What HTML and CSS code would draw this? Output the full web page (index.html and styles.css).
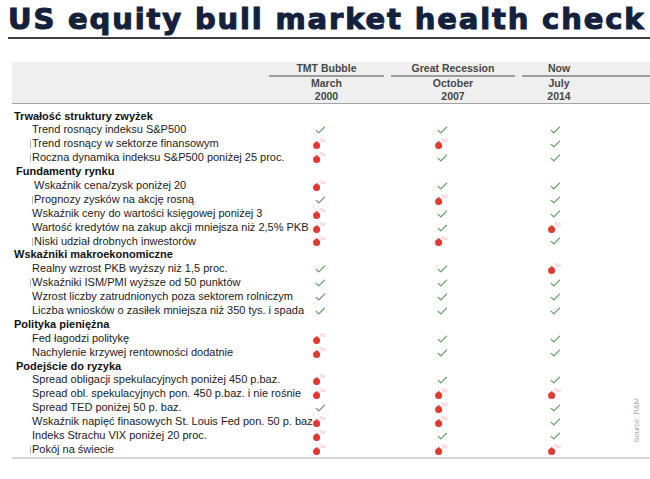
FILE: index.html
```html
<!DOCTYPE html>
<html lang="pl">
<head>
<meta charset="utf-8">
<title>US equity bull market health check</title>
<link rel="stylesheet" href="styles.css">
</head>
<body>
<header class="titlebar">
  <h1 class="title">US equity bull market health check</h1>
</header>

<section class="colhead">
  <div class="spacer"></div>
  <div class="group">
    <div class="gname">TMT Bubble</div>
    <div class="gline">March</div>
    <div class="gline">2000</div>
  </div>
  <div class="group">
    <div class="gname">Great Recession</div>
    <div class="gline">October</div>
    <div class="gline">2007</div>
  </div>
  <div class="group now">
    <div class="gname">Now</div>
    <div class="gline">July</div>
    <div class="gline">2014</div>
  </div>
</section>

<section class="table" id="table"></section>

<div class="source">Source: R&amp;M</div>

<svg class="defs" width="0" height="0" aria-hidden="true">
  <symbol id="ok" viewBox="0 0 16 12">
    <path d="M3.2 6.4 L5.8 8.9 L11.6 3.1" fill="none" stroke="#5fa35f" stroke-width="1.3" stroke-linecap="round" stroke-linejoin="round"/>
  </symbol>
  <symbol id="no" viewBox="0 0 16 12">
    <circle cx="3.6" cy="7.6" r="3.5" fill="#e2382f"/>
    <path d="M2.5 4.6 L3.8 2.7 L5.3 4.4 Z" fill="#e2382f"/>
  </symbol>
</svg>

<script src="app.js"></script>
</body>
</html>
```

FILE: app.js
```js
const data = [
  ["h", "Trwałość struktury zwyżek"],
  ["i", "Trend rosnący indeksu S&P500", "CCC"],
  ["i", "Trend rosnący w sektorze finansowym", "XXC", 1],
  ["i", "Roczna dynamika indeksu S&P500 poniżej 25 proc.", "XCC", 1],
  ["h", "Fundamenty rynku", null, 0, 1],
  ["i", "Wskaźnik cena/zysk poniżej 20", "XCC", 0, 1],
  ["i", "Prognozy zysków na akcję rosną", "CXC", 1, 1],
  ["i", "Wskaźnik ceny do wartości księgowej poniżej 3", "XCC"],
  ["i", "Wartość kredytów na zakup akcji mniejsza niż 2,5% PKB", "XCX"],
  ["i", "Niski udział drobnych inwestorów", "XXC", 1, 1],
  ["h", "Wskaźniki makroekonomiczne"],
  ["i", "Realny wzrost PKB wyższy niż 1,5 proc.", "CCX"],
  ["i", "Wskaźniki ISM/PMI wyższe od 50 punktów", "CCC", 1],
  ["i", "Wzrost liczby zatrudnionych poza sektorem rolniczym", "CCC"],
  ["i", "Liczba wniosków o zasiłek mniejsza niż 350 tys. i spada", "CCC"],
  ["h", "Polityka pieniężna"],
  ["i", "Fed łagodzi politykę", "XCC"],
  ["i", "Nachylenie krzywej rentowności dodatnie", "XCC"],
  ["h", "Podejście do ryzyka", null, 0, 1],
  ["i", "Spread obligacji spekulacyjnych poniżej 450 p.baz.", "XCC"],
  ["i", "Spread obl. spekulacyjnych pon. 450 p.baz. i nie rośnie", "XXX"],
  ["i", "Spread TED poniżej 50 p. baz.", "CXC"],
  ["i", "Wskaźnik napięć finasowych St. Louis Fed pon. 50 p. baz.", "XXC"],
  ["i", "Indeks Strachu VIX poniżej 20 proc.", "XCC"],
  ["i", "Pokój na świecie", "XXX", 1]
];

const table = document.getElementById("table");
for (const [kind, text, marks, tick, shift] of data) {
  const label = document.createElement("div");
  label.className = (kind === "h" ? "head" : "item") + (tick ? " tick" : "") + (shift ? " shift" : "");
  label.textContent = text;
  table.appendChild(label);
  for (let c = 0; c < 3; c++) {
    const cell = document.createElement("div");
    cell.className = "mark";
    if (marks) {
      if (marks[c] === "C") {
        cell.innerHTML = '<svg class="icon" viewBox="0 0 16 12"><use href="#ok"/></svg>';
      } else {
        cell.innerHTML = '<svg class="icon" viewBox="0 0 16 12"><use href="#no"/></svg><span class="no-t">No</span>';
      }
    }
    table.appendChild(cell);
  }
}
```

FILE: styles.css
```css
* { box-sizing: border-box; }

html, body {
  margin: 0;
  padding: 0;
  background: #ffffff;
}

body {
  width: 650px;
  height: 479px;
  overflow: hidden;
  position: relative;
  font-family: "Liberation Sans", Arial, sans-serif;
  color: #1b1b1b;
}

.defs {
  position: absolute;
  left: 0;
  bottom: 0;
  width: 0;
  height: 0;
  overflow: hidden;
}

.titlebar {
  margin-left: 8px;
  height: 39px;
  padding-top: 2px;
  border-bottom: 2px solid #3a3d44;
}

.title {
  margin: 0;
  font-family: "DejaVu Sans", sans-serif;
  font-weight: 700;
  font-size: 29px;
  line-height: 34px;
  color: #14213d;
  letter-spacing: 1.85px;
  -webkit-text-stroke: 1.1px #14213d;
  white-space: nowrap;
}

.colhead {
  margin: 23px 0 0 12px;
  height: 42px;
  background: #efefef;
  border-bottom: 1px solid #a3a3a3;
  display: grid;
  grid-template-columns: 250px 115px 124px 1fr;
  column-gap: 7px;
  font-weight: 700;
  font-size: 10.5px;
  color: #474747;
}

.group {
  display: flex;
  flex-direction: column;
  text-align: center;
}

.gname {
  height: 15px;
  line-height: 13px;
  border-bottom: 2px solid #9c9c9c;
}

.gline {
  height: 13px;
  line-height: 13px;
}

.group.now .gline,
.group.now .gname {
  padding-right: 54px;
}

.table {
  margin: 5.5px 0 0 12px;
  display: grid;
  grid-template-columns: 302px 122px 113px 1fr;
  grid-auto-rows: 13.9px;
  border-bottom: 2px solid #d6d6d6;
  font-size: 11px;
}

.head,
.item {
  line-height: 13.9px;
  white-space: nowrap;
}

.head {
  font-weight: 700;
  padding-left: 2px;
  color: #111111;
}

.item {
  padding-left: 20px;
}

.head.shift { padding-left: 4px; }
.item.shift { padding-left: 22px; }

.tick::before {
  content: "";
  display: inline-block;
  width: 1px;
  height: 8px;
  margin-right: 1px;
  margin-left: -2px;
  background: #b5b5b5;
  vertical-align: -1px;
}

.mark {
  display: flex;
  align-items: center;
  position: relative;
}

.icon {
  width: 16px;
  height: 12px;
  margin-left: -1px;
}

.no-t {
  position: absolute;
  left: 5.5px;
  top: 0px;
  font-size: 5px;
  line-height: 6px;
  color: #f0b4b4;
}

.source {
  position: absolute;
  left: 614px;
  top: 416px;
  width: 44px;
  transform: rotate(-90deg);
  font-size: 7.5px;
  color: #a6a6a6;
  white-space: nowrap;
  text-align: center;
}
```
